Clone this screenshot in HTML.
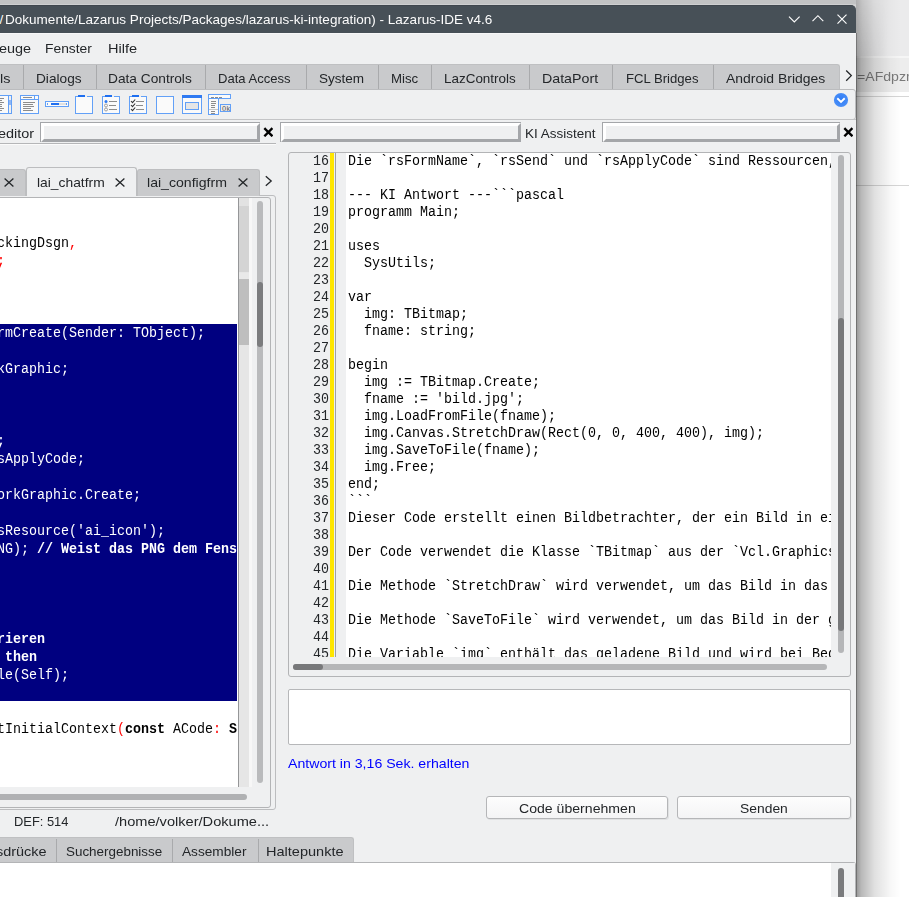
<!DOCTYPE html>
<html><head><meta charset="utf-8">
<style>
*{margin:0;padding:0;box-sizing:border-box}
html,body{width:909px;height:897px;overflow:hidden;background:#fff;position:relative}
body{font-family:"Liberation Sans",sans-serif;color:#232629}
.a{position:absolute}
.t{position:absolute;white-space:pre;transform-origin:0 0}
.m{position:absolute;font-family:"Liberation Mono",monospace;white-space:pre;transform-origin:0 0}
.m b{font-weight:bold}
</style></head><body>
<div class="a" style="left:0px;top:0px;width:909px;height:4px;background:#c2c3c4;"></div>
<div class="a" style="left:0px;top:4px;width:909px;height:1px;background:#cfd0d1;"></div>
<div class="a" style="left:856px;top:0px;width:53px;height:897px;background:#ffffff;"></div>
<div class="a" style="left:856px;top:0px;width:53px;height:56px;background:#ebebec;"></div>
<div class="a" style="left:856px;top:56px;width:53px;height:2px;background:#f6f6f6;"></div>
<div class="a" style="left:856px;top:58px;width:53px;height:34px;background:#ededed;"></div>
<div class="a" style="left:856px;top:96px;width:53px;height:1px;background:#d6d6d6;"></div>
<div class="a" style="left:856px;top:185px;width:53px;height:1px;background:#d6d6d6;"></div>
<div class="t" style="left:857.20px;top:69.82px;font-size:13.2px;line-height:13.2px;color:#7a7a7a;font-weight:normal;transform:scaleX(1.0700);">=AFdpzn</div>
<div class="a" style="left:856px;top:0px;width:53px;height:56px;background:linear-gradient(to right,rgba(0,0,0,.26),rgba(0,0,0,.16) 12%,rgba(0,0,0,.07) 35%,rgba(0,0,0,.02) 65%,rgba(0,0,0,0) 85%);"></div>
<div class="a" style="left:856px;top:0px;width:53px;height:56px;background:linear-gradient(to bottom,rgba(0,0,0,0),rgba(0,0,0,.12));-webkit-mask-image:linear-gradient(to right,#000,transparent 60%)"></div>
<div class="a" style="left:856px;top:56px;width:53px;height:841px;background:linear-gradient(to right,rgba(0,0,0,.42),rgba(0,0,0,.28) 10%,rgba(0,0,0,.12) 35%,rgba(0,0,0,.03) 65%,rgba(0,0,0,0) 85%);"></div>
<div class="a" style="left:0px;top:33px;width:856px;height:864px;background:#eff0f1;"></div>
<div class="a" style="left:830px;top:5px;width:26px;height:10px;background:#d4d5d6;"></div>
<div class="a" style="left:0px;top:5px;width:856px;height:28px;background:#475057;border-top-right-radius:5px;border-top:1px solid #40474e"></div>
<div class="a" style="left:0px;top:33px;width:856px;height:1px;background:#f7f7f8;"></div>
<div class="t" style="left:5.20px;top:13.27px;font-size:13.5px;line-height:13.5px;color:#fcfcfc;font-weight:normal;transform:scaleX(1.0023);">Dokumente/Lazarus Projects/Packages/lazarus-ki-integration) - Lazarus-IDE v4.6</div>
<div class="t" style="left:-0.50px;top:13.27px;font-size:13.5px;line-height:13.5px;color:#fcfcfc;font-weight:normal;transform:scaleX(1.0000);">/</div>
<svg class="a" style="left:780px;top:0px" width="76" height="33">
 <path d="M9 16.6 L14.3 21.9 L19.6 16.6" stroke="#fcfcfc" stroke-width="1.15" fill="none"/>
 <path d="M32.5 21.1 L37.9 15.7 L43.3 21.1" stroke="#fcfcfc" stroke-width="1.15" fill="none"/>
 <path d="M57.5 14.7 L66.5 23.7 M66.5 14.7 L57.5 23.7" stroke="#fcfcfc" stroke-width="1.15" fill="none"/>
</svg>
<div class="t" style="left:-0.59px;top:42.37px;font-size:13.5px;line-height:13.5px;color:#232629;font-weight:normal;transform:scaleX(1.0700);">euge</div>
<div class="t" style="left:45.48px;top:42.37px;font-size:13.5px;line-height:13.5px;color:#232629;font-weight:normal;transform:scaleX(1.0249);">Fenster</div>
<div class="t" style="left:107.52px;top:42.37px;font-size:13.5px;line-height:13.5px;color:#232629;font-weight:normal;transform:scaleX(1.0785);">Hilfe</div>
<div class="a" style="left:-5px;top:64px;width:844.7px;height:25.5px;background:#c9cacc;border-top:1px solid #bfc0c2;border-right:1px solid #bfc0c2;border-top-right-radius:3px"></div>
<div class="t" style="left:-7.73px;top:71.57px;font-size:13.5px;line-height:13.5px;color:#232629;font-weight:normal;transform:scaleX(1.0700);">ols</div>
<div class="a" style="left:23.3px;top:65px;width:1.0px;height:24.5px;background:#a9aaac;"></div>
<div class="t" style="left:36.39px;top:71.57px;font-size:13.5px;line-height:13.5px;color:#232629;font-weight:normal;transform:scaleX(1.0119);">Dialogs</div>
<div class="a" style="left:95.5px;top:65px;width:1.0px;height:24.5px;background:#a9aaac;"></div>
<div class="t" style="left:108.29px;top:71.57px;font-size:13.5px;line-height:13.5px;color:#232629;font-weight:normal;transform:scaleX(1.0148);">Data Controls</div>
<div class="a" style="left:204.5px;top:65px;width:1.0px;height:24.5px;background:#a9aaac;"></div>
<div class="t" style="left:218.43px;top:71.57px;font-size:13.5px;line-height:13.5px;color:#232629;font-weight:normal;transform:scaleX(0.9676);">Data Access</div>
<div class="a" style="left:305.5px;top:65px;width:1.0px;height:24.5px;background:#a9aaac;"></div>
<div class="t" style="left:318.90px;top:71.57px;font-size:13.5px;line-height:13.5px;color:#232629;font-weight:normal;transform:scaleX(1.0031);">System</div>
<div class="a" style="left:377.5px;top:65px;width:1.0px;height:24.5px;background:#a9aaac;"></div>
<div class="t" style="left:390.52px;top:71.57px;font-size:13.5px;line-height:13.5px;color:#232629;font-weight:normal;transform:scaleX(0.9817);">Misc</div>
<div class="a" style="left:431.1px;top:65px;width:1.0px;height:24.5px;background:#a9aaac;"></div>
<div class="t" style="left:444.00px;top:71.57px;font-size:13.5px;line-height:13.5px;color:#232629;font-weight:normal;transform:scaleX(0.9960);">LazControls</div>
<div class="a" style="left:529.2px;top:65px;width:1.0px;height:24.5px;background:#a9aaac;"></div>
<div class="t" style="left:542.15px;top:71.57px;font-size:13.5px;line-height:13.5px;color:#232629;font-weight:normal;transform:scaleX(1.0528);">DataPort</div>
<div class="a" style="left:612.4px;top:65px;width:1.0px;height:24.5px;background:#a9aaac;"></div>
<div class="t" style="left:625.63px;top:71.57px;font-size:13.5px;line-height:13.5px;color:#232629;font-weight:normal;transform:scaleX(0.9720);">FCL Bridges</div>
<div class="a" style="left:712.6px;top:65px;width:1.0px;height:24.5px;background:#a9aaac;"></div>
<div class="t" style="left:726.40px;top:71.57px;font-size:13.5px;line-height:13.5px;color:#232629;font-weight:normal;transform:scaleX(1.0332);">Android Bridges</div>
<svg class="a" style="left:843px;top:68px" width="12" height="16"><path d="M3.2 2.5 L8.3 7.6 L3.2 12.7" stroke="#232629" stroke-width="1.3" fill="none"/></svg>
<div class="a" style="left:-5px;top:89px;width:861px;height:31px;background:#eff0f1;border:1px solid #bbbcbe;border-radius:0 3px 3px 3px"></div>
<svg class="a" style="left:833px;top:92px" width="16" height="16"><defs><radialGradient id="bg1" cx="50%" cy="45%" r="55%"><stop offset="0" stop-color="#2f7cf6"/><stop offset="1" stop-color="#4a8ff7"/></radialGradient></defs><circle cx="8" cy="8" r="7.1" fill="url(#bg1)"/><path d="M4.3 6.3 L8 9.9 L11.7 6.3" stroke="#fff" stroke-width="1.9" fill="none"/></svg>
<svg class="a" style="left:0;top:90px" width="240" height="28" shape-rendering="crispEdges">
<g fill="#fafafa" stroke="#62a0f7" stroke-width="1">
 <rect x="-7.5" y="5.5" width="19" height="18"/>
 <rect x="20.5" y="5.5" width="18" height="18"/>
 <rect x="45.5" y="11.5" width="23" height="5"/>
 <rect x="75.5" y="6.5" width="17" height="17"/>
 <rect x="102.5" y="6.5" width="17" height="17"/>
 <rect x="129.5" y="6.5" width="17" height="17"/>
 <rect x="156.5" y="6.5" width="17" height="17"/>
 <rect x="182.5" y="5.5" width="19" height="18"/>
 <rect x="208.5" y="4.5" width="22" height="4"/>
 <rect x="208.5" y="8.5" width="10" height="16"/>
</g>
<g stroke="#62a0f7" stroke-width="1" fill="none">
 <rect x="8.5" y="5.5" width="3" height="18" fill="#f0f0f0"/>
 <line x1="20.5" y1="9.5" x2="38.5" y2="9.5"/><line x1="34.5" y1="5.5" x2="34.5" y2="9.5"/>
 <rect x="185.5" y="12.5" width="13" height="7" fill="#e6e6e6"/>
 <rect x="220.5" y="14.5" width="10" height="7" fill="#ececec"/>
</g>
<g fill="#62a0f7" shape-rendering="crispEdges">
 <rect x="9" y="10" width="2" height="5" fill="#8fb6f4"/>
 <rect x="51" y="13" width="8" height="2" fill="#1f6ff0"/>
 <rect x="47" y="13" width="1" height="2"/><rect x="66" y="13" width="1" height="2"/>
 <rect x="78" y="5" width="7" height="2" fill="#1f6ff0"/><rect x="105" y="5" width="7" height="2" fill="#1f6ff0"/><rect x="132" y="5" width="7" height="2" fill="#1f6ff0"/>
 <rect x="182" y="5" width="20" height="3" fill="#2f7af2"/>
</g>
<g fill="#eeeff0"><rect x="85" y="6" width="2" height="1"/><rect x="112" y="6" width="2" height="1"/><rect x="139" y="6" width="2" height="1"/></g>
<rect x="59" y="13" width="7" height="2" fill="#e0e0e0"/>
<g stroke="#8c8c8c" stroke-width="1" fill="none">
 <path d="M-2 8.5h6M-2 10.5h4M-2 12.5h6M-2 14.5h4M-2 16.5h4M-2 18.5h6M-2 20.5h4"/>
 <path d="M23 7.5h9M23 12.5h12M23 14.5h10M23 16.5h11M23 18.5h8M23 20.5h10"/>
 <path d="M109 11.5h8M109 15.5h7M109 19.5h8"/>
 <path d="M136 11.5h8M136 15.5h7M136 19.5h8"/>
 <path d="M211 7.5h3M215 7.5h3M219 7.5h3M211 11.5h5M211 13.5h5M211 15.5h4M211 17.5h4M211 21.5h4M211 23.5h4"/>
 <path d="M209 19.5h9" stroke="#c8c8c8"/>
</g>
<g shape-rendering="geometricPrecision">
 <circle cx="106" cy="11.5" r="1.5" fill="#2f7af2"/>
 <circle cx="106" cy="15.5" r="1.5" fill="none" stroke="#8c8c8c" stroke-width="0.8"/><circle cx="106" cy="19.5" r="1.5" fill="none" stroke="#8c8c8c" stroke-width="0.8"/>
 <path d="M131 11l1.5 1.7 2.7-3.2M131 15l1.5 1.7 2.7-3.2M131 19l1.5 1.7 2.7-3.2" stroke="#333" stroke-width="1.1" fill="none"/>
 <text x="222" y="20.5" font-family="Liberation Mono" font-size="7" fill="#555">Ok</text>
</g>
</svg>
<div class="a" style="left:-5px;top:119px;width:861px;height:1px;background:#c3c4c6;"></div>
<div class="t" style="left:-1.67px;top:127.37px;font-size:13.5px;line-height:13.5px;color:#232629;font-weight:normal;transform:scaleX(1.0700);">editor</div>
<div class="a" style="left:40px;top:122px;width:220px;height:20px;background:#eff0f1;border:1px solid #a4a6a9;border-right:none;border-bottom:none"></div>
<div class="a" style="left:41px;top:123px;width:219px;height:19px;background:transparent;border-style:solid;border-width:3px 3px 3px 3px;border-color:#ffffff #a4a6a9 #a4a6a9 #ffffff"></div>
<svg class="a" style="left:263px;top:127px" width="10" height="10"><path d="M2.2 2L8.6 8.4M8.6 2L2.2 8.4" stroke="#000" stroke-width="2.4" stroke-linecap="square"/></svg>
<div class="a" style="left:0px;top:143px;width:276px;height:1px;background:#b5b6b8;"></div>
<div class="a" style="left:0px;top:144px;width:276px;height:1px;background:#fbfbfb;"></div>
<div class="a" style="left:280px;top:122px;width:241px;height:20px;background:#eff0f1;border:1px solid #a4a6a9;border-right:none;border-bottom:none"></div>
<div class="a" style="left:281px;top:123px;width:240px;height:19px;background:transparent;border-style:solid;border-width:3px 3px 3px 3px;border-color:#ffffff #a4a6a9 #a4a6a9 #ffffff"></div>
<div class="t" style="left:525.40px;top:127.37px;font-size:13.5px;line-height:13.5px;color:#232629;font-weight:normal;transform:scaleX(0.9982);">KI Assistent</div>
<div class="a" style="left:602px;top:122px;width:238px;height:20px;background:#eff0f1;border:1px solid #a4a6a9;border-right:none;border-bottom:none"></div>
<div class="a" style="left:603px;top:123px;width:237px;height:19px;background:transparent;border-style:solid;border-width:3px 3px 3px 3px;border-color:#ffffff #a4a6a9 #a4a6a9 #ffffff"></div>
<svg class="a" style="left:843px;top:127px" width="10" height="10"><path d="M2.2 2L8.6 8.4M8.6 2L2.2 8.4" stroke="#000" stroke-width="2.4" stroke-linecap="square"/></svg>
<div class="a" style="left:-5px;top:195px;width:280.5px;height:615px;background:#eff0f1;border:1px solid #bcbdbf;border-radius:3px"></div>
<div class="a" style="left:-5px;top:197px;width:275.8px;height:610.5px;background:#eff0f1;border:1px solid #b3b4b6;border-radius:3px"></div>
<div class="a" style="left:-10px;top:169px;width:35.6px;height:27px;background:#c9cacc;border:1px solid #bdbec0;border-bottom:none;border-radius:3px 3px 0 0"></div>
<div class="a" style="left:136.6px;top:169px;width:123.1px;height:27px;background:#c9cacc;border:1px solid #bdbec0;border-bottom:none;border-radius:3px 3px 0 0"></div>
<div class="a" style="left:25.6px;top:167.4px;width:111.0px;height:29.1px;background:#eff0f1;border:1px solid #bcbdbf;border-bottom:none;border-radius:3px 3px 0 0"></div>
<svg class="a" style="left:4.1px;top:178.3px" width="10" height="9"><path d="M0.6 0.6L9.4 8.4M9.4 0.6L0.6 8.4" stroke="#232629" stroke-width="1.3" fill="none"/></svg>
<svg class="a" style="left:115px;top:178.3px" width="10" height="9"><path d="M0.6 0.6L9.4 8.4M9.4 0.6L0.6 8.4" stroke="#232629" stroke-width="1.3" fill="none"/></svg>
<svg class="a" style="left:238px;top:178.3px" width="10" height="9"><path d="M0.6 0.6L9.4 8.4M9.4 0.6L0.6 8.4" stroke="#232629" stroke-width="1.3" fill="none"/></svg>
<div class="t" style="left:36.60px;top:176.27px;font-size:13.5px;line-height:13.5px;color:#232629;font-weight:normal;transform:scaleX(1.0247);">lai_chatfrm</div>
<div class="t" style="left:147.30px;top:176.27px;font-size:13.5px;line-height:13.5px;color:#232629;font-weight:normal;transform:scaleX(1.0448);">lai_configfrm</div>
<svg class="a" style="left:264px;top:175px" width="10" height="13"><path d="M1.8 1.2L7.2 6L1.8 10.8" stroke="#232629" stroke-width="1.3" fill="none"/></svg>
<div class="a" style="left:0px;top:198px;width:238px;height:589px;background:#ffffff;"></div>
<div class="a" style="left:0px;top:324px;width:237px;height:377px;background:#000080;"></div>
<div class="a" style="left:238px;top:198px;width:1px;height:589px;background:#959698;"></div>
<div class="a" style="left:239px;top:198px;width:10px;height:589px;background:#e6e6e6;"></div>
<div class="a" style="left:239px;top:198px;width:10px;height:7.7px;background:#e2e2e2;"></div>
<div class="a" style="left:239px;top:205.7px;width:10px;height:66.8px;background:#d4d4d4;"></div>
<div class="a" style="left:239px;top:272.5px;width:10px;height:6.5px;background:#e9e9e9;"></div>
<div class="a" style="left:239px;top:279px;width:10px;height:66px;background:#bebebe;"></div>
<div class="a" style="left:249px;top:198px;width:3px;height:589px;background:#f7f7f7;"></div>
<div class="a" style="left:256.8px;top:201px;width:6.0px;height:582px;background:#b9babc;border-radius:3px"></div>
<div class="a" style="left:256.8px;top:282px;width:6.0px;height:65px;background:#7b7c7e;border-radius:3px"></div>
<div class="a" style="left:-5px;top:793.9px;width:251.5px;height:5.9px;background:#b0b1b3;border-radius:3px"></div>
<div class="a" style="left:288px;top:151.5px;width:563.4px;height:525.5px;background:#eff0f1;border:1px solid #b3b4b6;border-radius:3px"></div>
<div class="a" style="left:346px;top:152.5px;width:485px;height:504.5px;background:#ffffff;"></div>
<div class="a" style="left:330px;top:152.5px;width:4.4px;height:504.5px;background:#ffe600;"></div>
<div class="a" style="left:334.8px;top:152.5px;width:1.0px;height:504.5px;background:#9fa0a2;"></div>
<div class="a" style="left:838px;top:155.4px;width:6px;height:497.6px;background:#b5b6b8;border-radius:3px"></div>
<div class="a" style="left:838px;top:318px;width:6px;height:312.6px;background:#77787a;border-radius:3px"></div>
<div class="a" style="left:292.8px;top:664.2px;width:534.2px;height:5.5px;background:#b5b6b8;border-radius:3px"></div>
<div class="a" style="left:292.8px;top:664.2px;width:30.6px;height:5.5px;background:#77787a;border-radius:3px"></div>
<div class="a" style="left:288px;top:689.2px;width:563.4px;height:55.8px;background:#ffffff;border:1px solid #b6b7b9;border-radius:2px"></div>
<div class="t" style="left:287.70px;top:757.17px;font-size:13.5px;line-height:13.5px;color:#0000ff;font-weight:normal;transform:scaleX(1.0466);">Antwort in 3,16 Sek. erhalten</div>
<div class="a" style="left:486.3px;top:796.3px;width:181.7px;height:22.9px;background:linear-gradient(#fdfdfd,#f4f4f5);border:1px solid #b5b6b8;border-radius:3px;box-shadow:1px 1px 0 rgba(0,0,0,.06)"></div>
<div class="a" style="left:677.3px;top:796.3px;width:173.9px;height:22.9px;background:linear-gradient(#fdfdfd,#f4f4f5);border:1px solid #b5b6b8;border-radius:3px;box-shadow:1px 1px 0 rgba(0,0,0,.06)"></div>
<div class="t" style="left:518.50px;top:802.07px;font-size:13.5px;line-height:13.5px;color:#232629;font-weight:normal;transform:scaleX(1.0438);">Code übernehmen</div>
<div class="t" style="left:740.00px;top:802.07px;font-size:13.5px;line-height:13.5px;color:#232629;font-weight:normal;transform:scaleX(1.0274);">Senden</div>
<div class="t" style="left:14.45px;top:814.57px;font-size:13.5px;line-height:13.5px;color:#232629;font-weight:normal;transform:scaleX(0.9537);">DEF: 514</div>
<div class="t" style="left:114.90px;top:814.57px;font-size:13.5px;line-height:13.5px;color:#232629;font-weight:normal;transform:scaleX(1.0811);">/home/volker/Dokume...</div>
<div class="a" style="left:-5px;top:837.4px;width:358.7px;height:25.1px;background:#c9cacc;border-top:1px solid #bfc0c2;border-right:1px solid #bfc0c2;border-top-right-radius:3px"></div>
<div class="t" style="left:-3.94px;top:845.37px;font-size:13.5px;line-height:13.5px;color:#232629;font-weight:normal;transform:scaleX(1.0700);">sdrücke</div>
<div class="a" style="left:56.4px;top:838.5px;width:1.0px;height:24.0px;background:#a9aaac;"></div>
<div class="t" style="left:66.30px;top:845.37px;font-size:13.5px;line-height:13.5px;color:#232629;font-weight:normal;transform:scaleX(0.9937);">Suchergebnisse</div>
<div class="a" style="left:172.4px;top:838.5px;width:1.0px;height:24.0px;background:#a9aaac;"></div>
<div class="t" style="left:181.80px;top:845.37px;font-size:13.5px;line-height:13.5px;color:#232629;font-weight:normal;transform:scaleX(1.0113);">Assembler</div>
<div class="a" style="left:257.7px;top:838.5px;width:1.0px;height:24.0px;background:#a9aaac;"></div>
<div class="t" style="left:266.22px;top:845.37px;font-size:13.5px;line-height:13.5px;color:#232629;font-weight:normal;transform:scaleX(1.0760);">Haltepunkte</div>
<div class="a" style="left:0px;top:862px;width:856px;height:35px;background:#ffffff;border-top:1px solid #b3b4b6;border-right:1px solid #b3b4b6;border-top-right-radius:3px"></div>
<div class="a" style="left:831px;top:863px;width:24px;height:34px;background:#eff0f1;"></div>
<div class="a" style="left:838px;top:867.5px;width:6px;height:37.5px;background:#7a7b7d;border-radius:3px"></div>
<div class="a" style="left:856px;top:33px;width:1px;height:864px;background:rgba(0,0,0,.25);"></div>
<div class="a" style="left:0;top:197px;width:237.6px;height:589px;overflow:hidden"><div style="position:absolute;left:0;top:-197px;width:400px;height:900px"><div class="m" style="left:-3px;top:197.87px;font-size:14.0px;line-height:18px;color:#000;transform:scaleX(0.9524)">

ckingDsgn<span style="color:#f00">,</span>
<span style="color:#f00">;</span>



<span style="color:#fff">rmCreate(Sender: TObject);</span>

<span style="color:#fff">kGraphic;</span>



<span style="color:#fff">;</span>
<span style="color:#fff">sApplyCode;</span>

<span style="color:#fff">orkGraphic.Create;</span>

<span style="color:#fff">sResource('ai_icon');</span>
<span style="color:#fff">NG); <b>// Weist das PNG dem Fenster zu</b></span>




<span style="color:#fff"><b>rieren</b></span>
<span style="color:#fff"> <b>then</b></span>
<span style="color:#fff">le(Self);</span>


tInitialContext<span style="color:#f00">(</span><b>const</b> ACode<span style="color:#f00">:</span> <b>String</b><span style="color:#f00">)</span>


</div></div></div>
<div class="a" style="left:300px;top:152.5px;width:30px;height:504.5px;overflow:hidden"><div class="m" style="left:13.2px;top:0.07px;font-size:14.0px;line-height:17px;color:#232629;transform:scaleX(0.9524)">16
17
18
19
20
21
22
23
24
25
26
27
28
29
30
31
32
33
34
35
36
37
38
39
40
41
42
43
44
45</div></div>
<div class="a" style="left:346px;top:152.5px;width:485px;height:504.5px;overflow:hidden"><div class="m" style="left:2.2px;top:0.07px;font-size:14.0px;line-height:17px;color:#000;transform:scaleX(0.9524)">Die `rsFormName`, `rsSend` und `rsApplyCode` sind Ressourcen, die

--- KI Antwort ---```pascal
programm Main;

uses
  SysUtils;

var
  img: TBitmap;
  fname: string;

begin
  img := TBitmap.Create;
  fname := 'bild.jpg';
  img.LoadFromFile(fname);
  img.Canvas.StretchDraw(Rect(0, 0, 400, 400), img);
  img.SaveToFile(fname);
  img.Free;
end;
```
Dieser Code erstellt einen Bildbetrachter, der ein Bild in einer

Der Code verwendet die Klasse `TBitmap` aus der `Vcl.Graphics` Unit

Die Methode `StretchDraw` wird verwendet, um das Bild in das Fenster

Die Methode `SaveToFile` wird verwendet, um das Bild in der gleichen

Die Variable `img` enthält das geladene Bild und wird bei Bedarf</div></div>
</body></html>
